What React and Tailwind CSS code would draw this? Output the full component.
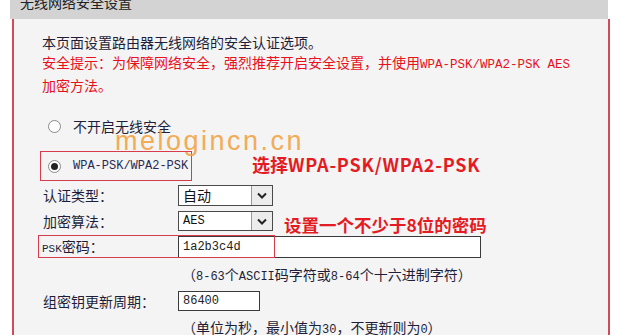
import React from "react";

const CJK = { fontFamily: '"Noto Sans CJK SC", "Noto Sans", sans-serif' };
const MONO = { fontFamily: '"Liberation Mono", "Noto Sans CJK SC", monospace' };

function Radio({ checked }) {
  return (
    <span className="w-[13px] h-[13px] rounded-full border border-[#8a8a8a] bg-white flex items-center justify-center shrink-0">
      {checked && <span className="w-[7px] h-[7px] rounded-full bg-[#222]" />}
    </span>
  );
}

function Select({ value, mono }) {
  return (
    <div className="w-[95px] h-full border border-[#4a4a4a] bg-white flex">
      <div className="flex-1 pl-[4px] flex items-center text-[14px] text-[#111]" style={mono ? MONO : undefined}>
        <span className={mono ? "text-[12px]" : ""}>{value}</span>
      </div>
      <div className="w-[21px] border-l border-[#9a9a9a] bg-[#ececec] flex items-center justify-center">
        <svg width="10" height="7" viewBox="0 0 10 7">
          <path d="M1 1.5 L5 5.5 L9 1.5" fill="none" stroke="#222" strokeWidth="2" />
        </svg>
      </div>
    </div>
  );
}

export default function App() {
  return (
    <div className="w-[617px] h-[335px] bg-white overflow-hidden text-[#1e1e38]" style={CJK}>
      <div className="ml-[10px] w-[598px] h-[19px] bg-[#d3d3d3] overflow-hidden">
        <div className="pl-[10px] -mt-[6px] text-[14px] leading-[16px] text-[#222]">无线网络安全设置</div>
      </div>
      <div className="ml-[12px] w-[598px] h-[316px] border-l-2 border-r-2 border-[#d24b5a] bg-[#f4f4f4] relative">
        <div className="pl-[28px] pt-[13px]">
          <div className="text-[14px] leading-[20px]">本页面设置路由器无线网络的安全认证选项。</div>
          <div className="text-[14px] leading-[20px] text-[#e8101c]">
            安全提示：为保障网络安全，强烈推荐开启安全设置，并使用
            <span className="text-[12.5px]" style={MONO}>WPA-PSK/WPA2-PSK AES</span>
          </div>
          <div className="text-[14px] leading-[20px] text-[#e8101c]">加密方法。</div>

          <div className="mt-[21px] h-[20px] flex items-center pl-[6px] gap-[12px] text-[14px]">
            <Radio />
            <span>不开启无线安全</span>
          </div>

          <div className="mt-[15px] -ml-[2px] w-[152px] h-[30px] border-[1.5px] border-[#d83c4c] flex items-center pl-[7px] gap-[12px]">
            <Radio checked />
            <span className="text-[12px] text-[#2a2a55]" style={MONO}>WPA-PSK/WPA2-PSK</span>
          </div>

          <div className="mt-[4px] h-[21px] flex items-center">
            <span className="w-[136px] pl-[1px] text-[14px]">认证类型：</span>
            <Select value="自动" />
          </div>
          <div className="mt-[5px] h-[20px] flex items-center">
            <span className="w-[136px] pl-[1px] text-[14px]">加密算法：</span>
            <Select value="AES" mono />
          </div>

          <div className="mt-[4px] h-[23px] flex items-center relative">
            <span className="w-[136px] text-[14px]">
              <span className="text-[11px]" style={MONO}>PSK</span>密码：
            </span>
            <div className="w-[303px] h-[22px] border border-[#3a3a3a] bg-white flex items-center pl-[4px]">
              <span className="text-[12px] text-[#222]" style={MONO}>1a2b3c4d</span>
            </div>
            <div className="absolute left-[-4px] top-0 w-[237px] h-[23px] border-[1.5px] border-[#d83c4c]" />
          </div>

          <div className="mt-[7px] h-[20px] flex items-center pl-[140px] text-[14px] whitespace-nowrap">
            <span>
              （<span className="text-[12px]" style={MONO}>8-63</span>个<span className="text-[12px]" style={MONO}>ASCII</span>码字符或<span className="text-[12px]" style={MONO}>8-64</span>个十六进制字符）
            </span>
          </div>

          <div className="mt-[6px] h-[20px] flex items-center">
            <span className="w-[136px] pl-[1px] text-[14px]">组密钥更新周期：</span>
            <div className="w-[82px] h-full border border-[#3a3a3a] bg-white flex items-center pl-[4px]">
              <span className="text-[12px] text-[#222]" style={MONO}>86400</span>
            </div>
          </div>

          <div className="mt-[7px] h-[20px] flex items-center pl-[140px] text-[14px] whitespace-nowrap">
            <span>
              （单位为秒，最小值为<span className="text-[12px]" style={MONO}>30</span>，不更新则为<span className="text-[12px]" style={MONO}>0</span>）
            </span>
          </div>
        </div>

        <div
          className="absolute left-[101px] top-[106px] text-[27px] leading-[32px] tracking-[2.5px] text-[#f2a445] opacity-90"
          style={{ fontFamily: '"Liberation Sans", sans-serif' }}
        >
          melogincn.cn
        </div>
        <div className="absolute left-[238px] top-[134px] text-[18px] leading-[22px] font-bold text-[#e41b23] whitespace-nowrap">
          选择<span className="tracking-[0.8px]">WPA-PSK/WPA2-PSK</span>
        </div>
        <div className="absolute left-[270px] top-[195px] text-[17.5px] leading-[22px] font-bold text-[#e41b23] whitespace-nowrap">
          设置一个不少于8位的密码
        </div>
      </div>
    </div>
  );
}
